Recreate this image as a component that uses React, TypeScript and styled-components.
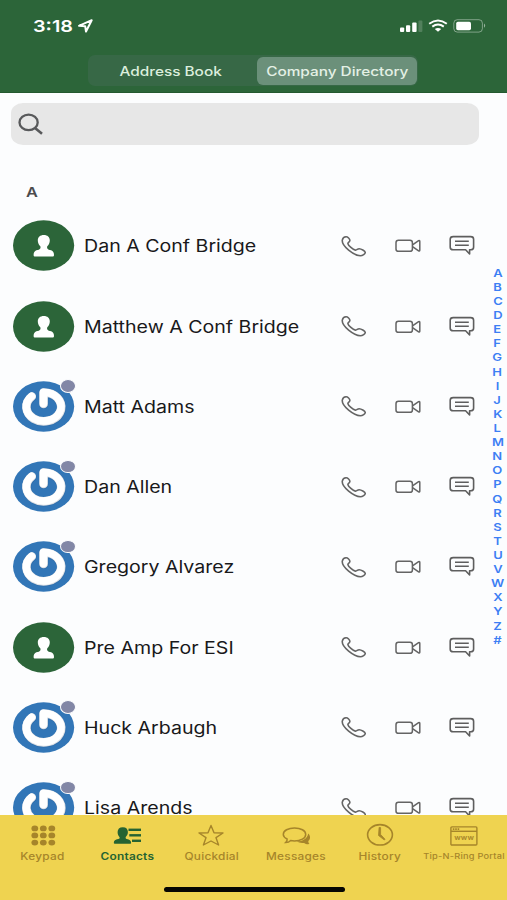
import React from "react";
import styled, { createGlobalStyle } from "styled-components";

const GlobalStyle = createGlobalStyle`
  * { box-sizing: border-box; }
  body { margin: 0; background: #fcfdfe; }
`;

const Screen = styled.div`
  width: 507px;
  height: 900px;
  display: flex;
  flex-direction: column;
  overflow: hidden;
  background: #fcfdfe;
  font-family: Inter, "Liberation Sans", sans-serif;
`;

const Wide = styled.span<{ $x?: number; $origin?: string }>`
  display: inline-block;
  white-space: nowrap;
  transform: scaleX(${(p) => p.$x ?? 1.2});
  transform-origin: ${(p) => p.$origin ?? "center"} center;
`;

const Header = styled.header`
  flex: none;
  height: 93.4px;
  background: #2c6539;
  border-bottom: 1px solid #24592f;
`;

const StatusBar = styled.div`
  height: 55px;
  padding: 0 20px 3px 32.5px;
  display: flex;
  align-items: center;
  justify-content: space-between;
  color: #fff;
`;

const Clock = styled.div`
  width: 61.5px;
  height: 20px;
  display: flex;
  align-items: center;
  justify-content: space-between;
  font-size: 16.5px;
  line-height: 20px;
  font-weight: 600;
`;

const Segments = styled.div`
  width: 330px;
  height: 31px;
  margin-left: 88px;
  padding: 2px 1px 1px;
  display: grid;
  grid-template-columns: 168px 160px;
  border-radius: 7px;
  background: #376846;
`;

const Segment = styled.button<{ $active?: boolean }>`
  height: 28px;
  padding: ${(p) => (p.$active ? "0" : "0 4px 0 0")};
  border: 0;
  border-radius: 6px;
  background: ${(p) => (p.$active ? "#6b907a" : "transparent")};
  color: ${(p) => (p.$active ? "#e4f0e5" : "#dceedd")};
  font: 500 12.8px/29px Inter, sans-serif;
  text-align: center;
`;

const SearchField = styled.div`
  flex: none;
  width: 468px;
  height: 42px;
  margin: 10px 0 0 11px;
  padding: 9.5px 0 0 7px;
  border-radius: 12px / 10px;
  background: #e7e7e7;
`;

const Body = styled.main`
  flex: 1;
  min-height: 0;
  display: flex;
  overflow: hidden;
`;

const List = styled.div`
  width: 488px;
`;

const SectionTitle = styled.h2`
  margin: 0;
  height: 60.4px;
  padding: 36.5px 0 0 26px;
  font-size: 13.6px;
  line-height: 20px;
  font-weight: 600;
  color: #4c4c4e;
`;

const Row = styled.div`
  height: 80.25px;
  padding-left: 13px;
  display: grid;
  grid-template-columns: 71.4px 256.9px 54px 53.5px 30px;
  align-items: center;
  > svg { margin-top: 1px; }
`;

const AvatarBox = styled.div`
  position: relative;
  width: 61.5px;
  height: 51px;
`;

const Presence = styled.i`
  position: absolute;
  left: 47px;
  top: -1.6px;
  width: 16px;
  height: 13.6px;
  border: 1.4px solid #fcfdfe;
  border-radius: 50%;
  background: #8287a6;
`;

const Name = styled.div`
  font-size: 16.8px;
  line-height: 24px;
  padding-top: 1px;
  color: #19191b;
`;

const Index = styled.nav`
  width: 19px;
  padding-top: 121.4px;
  display: flex;
  flex-direction: column;
  align-items: center;
`;

const IndexLetter = styled.a`
  height: 14.115px;
  font-size: 10.8px;
  line-height: 14.115px;
  font-weight: 600;
  color: #3d7ff4;
`;

const TabBar = styled.footer`
  flex: none;
  height: 84.6px;
  background: #efd350;
`;

const Tabs = styled.div`
  height: 68px;
  padding-left: 0.5px;
  display: grid;
  grid-template-columns: repeat(6, 84.35px);
`;

const Tab = styled.div<{ $active?: boolean; $small?: boolean }>`
  display: flex;
  flex-direction: column;
  align-items: center;
  padding-top: 8px;
  color: ${(p) => (p.$active ? "#256332" : "#a6852a")};
  font-size: ${(p) => (p.$small ? 7.7 : 9.9)}px;
  font-weight: ${(p) => (p.$active ? 600 : 500)};
  line-height: 14px;
  letter-spacing: 0.2px;
  svg { display: block; flex: none; margin-bottom: ${(p) => (p.$small ? 0.4 : -0.9)}px; }
`;

const HomeIndicator = styled.div`
  width: 181px;
  height: 5px;
  margin: 4px 0 0 163.5px;
  border-radius: 3px;
  background: #060602;
`;

const LocationIcon = () => (
  <svg width="17" height="16" viewBox="0 0 17 16">
    <path d="M2 7.8 L14.7 2.2 L9 13.5 L8.2 8.2 Z" fill="none" stroke="#fff" strokeWidth="2" strokeLinejoin="round" />
  </svg>
);

const StatusIcons = () => (
  <svg width="88" height="16" viewBox="0 0 88 16">
    <g fill="#fff">
      <rect x="1" y="9.4" width="4.2" height="4.5" rx="1" />
      <rect x="7" y="7.2" width="4.2" height="6.7" rx="1" />
      <rect x="13.2" y="4.6" width="4.4" height="9.3" rx="1" />
      <rect x="19.4" y="2.4" width="4" height="11.5" rx="1" opacity=".18" />
      <path d="M39 13.7 L35.8 11 Q39 8.8 42.2 11 Z" />
      <rect x="57.2" y="3.7" width="14.8" height="8.5" rx="1.7" />
      <path d="M85 5.5 Q87.4 7.6 85 9.8Z" opacity=".5" />
    </g>
    <g fill="none" stroke="#fff" strokeWidth="2">
      <path d="M30.2 5.8 Q39 -.8 47.8 5.8" />
      <path d="M33.3 8.6 Q39 4.4 44.8 8.6" />
      <rect x="54.8" y="1.7" width="28.6" height="12.4" rx="3.5" strokeWidth="1" opacity=".4" />
    </g>
  </svg>
);

const SearchIcon = () => (
  <svg width="26" height="24" viewBox="0 0 26 24">
    <g fill="none" stroke="#58595b" strokeWidth="2.3">
      <ellipse cx="10.6" cy="9.4" rx="9.1" ry="7.7" />
      <path d="M17 15 L24 20.8" strokeWidth="2.6" />
    </g>
  </svg>
);

const PersonAvatar = () => (
  <svg width="61.5" height="51" viewBox="0 0 61.5 51">
    <ellipse cx="30.6" cy="25.5" rx="30.6" ry="25.2" fill="#2c6539" />
    <path
      fill="#fff"
      d="M30.8 14.9c3.7 0 6 2.2 6 5.4 0 2.2-.9 4.6-2.3 5.8-.5.5-.5 1.5-.3 2.1.5 1.4 2.3 1.6 4 2.1 1.8.6 2.8 2.2 2.8 4.6 0 1.1-.5 1.7-1.7 1.7H22.3c-1.2 0-1.7-.6-1.7-1.7 0-2.4 1-4 2.8-4.6 1.7-.5 3.5-.7 4-2.1.2-.6.2-1.6-.3-2.1-1.4-1.2-2.3-3.6-2.3-5.8 0-3.2 2.3-5.4 6-5.4z"
    />
  </svg>
);

const POWER_PATH = "M18.6 15.2A17.4 14.4 0 1 0 34.6 11.6Q32.5 11.3 30.4 11.3V22.6";

const PowerAvatar = () => (
  <svg width="61.5" height="51" viewBox="0 0 61.5 51">
    <ellipse cx="30.6" cy="25.5" rx="30.6" ry="25.2" fill="#3276b7" />
    <g fill="none" strokeLinecap="round" strokeLinejoin="round">
      <path d={POWER_PATH} stroke="#265c94" strokeOpacity=".35" strokeWidth="9.2" transform="translate(.5 .8)" />
      <path d={POWER_PATH} stroke="#dde0e4" strokeWidth="8.6" transform="translate(.2 .3)" />
      <path d={POWER_PATH} stroke="#fff" strokeWidth="7.5" />
    </g>
  </svg>
);

const PhoneIcon = () => (
  <svg width="26" height="23" viewBox="0 0 26 23">
    <path
      d="M1.3 5.1C1.7 3.2 3.4 1.8 5 1.7c1.7-.1 3.9 2.2 3.9 3.7 0 1.5-2.2 1.8-2 3.2.3 1.9 5.2 6.1 7.4 6.5 1.7.3 2.1-1.5 3.9-1.4 1.8.1 5.9 2 6 3.5.2 1.8-2.7 3.5-4.9 3.5C13.1 20.7.4 11.1 1.3 5.1z"
      fill="none" stroke="#646464" strokeWidth="1.6" strokeLinejoin="round"
    />
  </svg>
);

const VideoIcon = () => (
  <svg width="27" height="16" viewBox="0 0 27 16">
    <g fill="none" stroke="#646464" strokeWidth="1.5" strokeLinejoin="round">
      <rect x="1" y="2.3" width="16.4" height="11" rx="2.4" />
      <path d="M17.5 6.8L23.6 2.7Q24.8 2.2 24.8 3.5V12Q24.8 13.4 23.6 12.8L17.5 8.6" />
    </g>
  </svg>
);

const ChatIcon = () => (
  <svg width="27" height="22" viewBox="0 0 27 22">
    <g fill="none" stroke="#5e5e5e" strokeWidth="1.6" strokeLinejoin="round">
      <path d="M4.2 1.6H21.6Q24.6 1.6 24.6 4.2V12.2Q24.6 14.8 21.6 14.8H20.6V19L16.6 14.8H4.2Q1.2 14.8 1.2 12.2V4.2Q1.2 1.6 4.2 1.6Z" />
      <path d="M6 6.3H19.8M6 10.2H19.8" />
    </g>
  </svg>
);

const KeypadIcon = () => (
  <svg width="26" height="26" viewBox="0 0 26 26" fill="currentColor">
    {[5.4, 12.4, 19.6].map((y) => [4.8, 13.3, 21.8].map((x) => <ellipse key={`${x}-${y}`} cx={x} cy={y} rx="3.4" ry="2.9" />))}
  </svg>
);

const ContactsIcon = () => (
  <svg width="28" height="26" viewBox="0 0 28 26" fill="currentColor">
    <path d="M9.8 4.2c3.4 0 5.1 2 5.1 4.9 0 2-.8 3.8-2 4.7-.6.8-.4 1.9.9 2.3 2.7.7 4.3 1.4 4.3 3.9 0 .6-.5.8-1 .8H1.8c-.6 0-1-.3-1-.8 0-2.5 1.6-3.3 4.3-3.9 1.8-.4 2-1.5 1.1-2.3-1-.9-1.6-2.7-1.6-4.7 0-2.9 1.8-4.9 5.2-4.9z" />
    <rect x="15.5" y="5.6" width="12.5" height="2.4" />
    <rect x="16.3" y="11.1" width="11.7" height="2.4" />
    <rect x="19" y="16.6" width="9" height="2.4" />
  </svg>
);

const StarIcon = () => (
  <svg width="28" height="26" viewBox="0 0 28 26">
    <path d="M14 2.4L17 9.7L26 10L19 14.7L21.6 22L14 18L6.4 22L9 14.7L2 10L11 9.7Z" fill="none" stroke="currentColor" strokeWidth="1.4" strokeLinejoin="round" />
  </svg>
);

const MessagesIcon = () => (
  <svg width="30" height="26" viewBox="0 0 30 26">
    <g transform="translate(1 .4)">
      <path d="M26.2 10.2c2.2 2.1 2.7 5.3.1 7.5 0 1.7.6 2.5 1.2 3-2 .4-4.1-.2-5.4-1.2-2.7.5-5.4-.1-7.2-1.3 5.6-.1 10.8-3 11.3-8z" fill="currentColor" />
      <path d="M12.5 4.5c6.2 0 11.2 2.8 11.2 6.5s-5 6.5-11.2 6.5c-1.4 0-2.7-.1-3.8-.4-1.4 1.5-3.2 2.1-5 2.1 1-.9 1.6-2 1.4-3.6-2.3-1.2-3.8-2.8-3.8-4.6 0-3.7 5-6.5 11.2-6.5z" fill="#efd350" stroke="currentColor" strokeWidth="1.5" />
    </g>
  </svg>
);

const HistoryIcon = () => (
  <svg width="28" height="26" viewBox="0 0 28 26">
    <ellipse cx="14" cy="11.8" rx="12.4" ry="10.2" fill="none" stroke="currentColor" strokeWidth="1.6" />
    <path d="M13.1 4.4L14.6 4.6V11.5L19 16.2L18.3 17L12.5 12.5Z" fill="currentColor" stroke="currentColor" strokeWidth=".8" />
  </svg>
);

const PortalIcon = () => (
  <svg width="28" height="26" viewBox="0 0 28 26">
    <g fill="none" stroke="currentColor" strokeWidth="1.4">
      <rect x=".9" y="3.9" width="26" height="18.1" rx="1" />
      <path d="M1 8.3H27" />
      <path d="M2.8 6.1H9.5" strokeWidth="1.6" strokeDasharray="1.6 .8" />
    </g>
    <text x="4.2" y="16.9" fontSize="6.8" fontWeight="600" fill="currentColor" textLength="20" lengthAdjust="spacingAndGlyphs">www</text>
  </svg>
);

const contacts = [
  { name: "Dan A Conf Bridge", person: true },
  { name: "Matthew A Conf Bridge", person: true },
  { name: "Matt Adams" },
  { name: "Dan Allen" },
  { name: "Gregory Alvarez" },
  { name: "Pre Amp For ESI", person: true },
  { name: "Huck Arbaugh" },
  { name: "Lisa Arends" },
];

const tabs = [
  { label: "Keypad", Icon: KeypadIcon },
  { label: "Contacts", Icon: ContactsIcon, active: true },
  { label: "Quickdial", Icon: StarIcon },
  { label: "Messages", Icon: MessagesIcon },
  { label: "History", Icon: HistoryIcon },
  { label: "Tip-N-Ring Portal", Icon: PortalIcon, small: true },
];

export default function App() {
  return (
    <Screen>
      <GlobalStyle />
      <Header>
        <StatusBar>
          <Clock>
            <Wide $origin="left">3:18</Wide>
            <LocationIcon />
          </Clock>
          <StatusIcons />
        </StatusBar>
        <Segments>
          <Segment><Wide>Address Book</Wide></Segment>
          <Segment $active><Wide>Company Directory</Wide></Segment>
        </Segments>
      </Header>
      <SearchField><SearchIcon /></SearchField>
      <Body>
        <List>
          <SectionTitle><Wide $origin="left">A</Wide></SectionTitle>
          {contacts.map(({ name, person }) => (
            <Row key={name}>
              <AvatarBox>
                {person ? <PersonAvatar /> : <PowerAvatar />}
                {!person && <Presence />}
              </AvatarBox>
              <Name><Wide $x={1.167} $origin="left">{name}</Wide></Name>
              <PhoneIcon />
              <VideoIcon />
              <ChatIcon />
            </Row>
          ))}
        </List>
        <Index>
          {"ABCDEFGHIJKLMNOPQRSTUVWXYZ#".split("").map((c) => (
            <IndexLetter key={c}><Wide>{c}</Wide></IndexLetter>
          ))}
        </Index>
      </Body>
      <TabBar>
        <Tabs>
          {tabs.map(({ label, Icon, active, small }) => (
            <Tab key={label} $active={active} $small={small}>
              <Icon />
              <Wide>{label}</Wide>
            </Tab>
          ))}
        </Tabs>
        <HomeIndicator />
      </TabBar>
    </Screen>
  );
}
